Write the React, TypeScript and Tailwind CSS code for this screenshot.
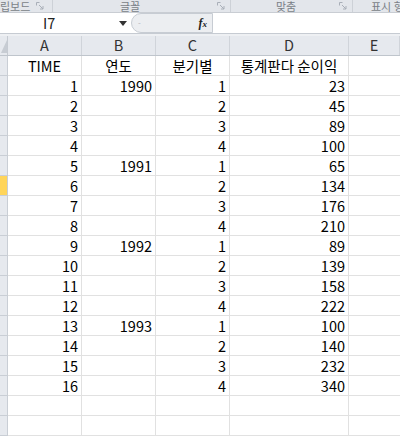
import React from "react";

const rows: [string, string, string, string][] = [
  ["1", "1990", "1", "23"],
  ["2", "", "2", "45"],
  ["3", "", "3", "89"],
  ["4", "", "4", "100"],
  ["5", "1991", "1", "65"],
  ["6", "", "2", "134"],
  ["7", "", "3", "176"],
  ["8", "", "4", "210"],
  ["9", "1992", "1", "89"],
  ["10", "", "2", "139"],
  ["11", "", "3", "158"],
  ["12", "", "4", "222"],
  ["13", "1993", "1", "100"],
  ["14", "", "2", "140"],
  ["15", "", "3", "232"],
  ["16", "", "4", "340"],
];

const font = { fontFamily: '"Noto Sans CJK KR", "Noto Sans", sans-serif' };

function Launcher() {
  return (
    <svg width="8" height="8" viewBox="0 0 8 8" className="shrink-0">
      <path d="M0.5 0.5h3M0.5 0.5v3" stroke="#a9afb8" fill="none" />
      <path d="M3 3l4 4M7 4v3H4" stroke="#a9afb8" fill="none" />
    </svg>
  );
}

export default function App() {
  const gridCols = "grid grid-cols-[8px_74px_74px_74px_119px_1fr]";
  return (
    <div className="w-[400px] h-[437px] overflow-hidden bg-white text-black" style={font}>
      {/* ribbon group labels */}
      <div className="h-[13px] bg-[#e3e6eb] border-b border-[#c9cdd3] flex text-[11px] leading-none text-[#7a7f87]">
        <div className="w-[53px] shrink-0 flex items-center justify-between pr-[8px] border-r border-[#cdd1d7] h-full">
          <span>립보드</span>
          <Launcher />
        </div>
        <div className="w-[178px] shrink-0 flex items-center justify-between pr-[5px] pl-[67px] border-r border-[#cdd1d7] h-full">
          <span>글꼴</span>
          <Launcher />
        </div>
        <div className="w-[122px] shrink-0 flex items-center justify-between pr-[5px] pl-[45px] border-r border-[#cdd1d7] h-full">
          <span>맞춤</span>
          <Launcher />
        </div>
        <div className="flex-1 min-w-0 flex items-center pl-[18px] h-full">
          <span className="whitespace-nowrap">표시 형</span>
        </div>
      </div>
      {/* formula bar */}
      <div className="h-[21px] flex items-center bg-white border-b border-[#c6cbd2]">
        <div className="w-[131px] shrink-0 h-full flex items-center relative">
          <span className="absolute left-[43px] text-[14.5px] leading-none text-[#222]">I7</span>
          <svg width="8" height="5" viewBox="0 0 8 5" className="absolute left-[119px] top-[8px]">
            <path d="M0 0h8L4 5z" fill="#333" />
          </svg>
        </div>
        <div className="w-[82px] shrink-0 h-[20px] rounded-l-full bg-[#eceef1] border border-[#c7ccd3] flex items-center justify-between pl-[6px] pr-[5px]">
          <span className="text-[8px] text-[#b0b4ba] leading-none">-</span>
          <span className="italic font-bold text-[12px] leading-none text-[#222]" style={{ fontFamily: '"Liberation Serif", serif' }}>
            f<span className="text-[9px]">x</span>
          </span>
        </div>
        <div className="flex-1 h-full bg-white" />
      </div>
      <div className="h-[2px] bg-[#eef0f3]" />
      {/* column headers */}
      <div className={`${gridCols} h-[20px] bg-[#e6e9ee] border-b border-[#bfc5cc] text-[14.5px] text-[#333]`}>
        <div className="border-r border-[#c5cad1] relative overflow-hidden">
          <svg width="8" height="19" className="absolute left-0 top-0">
            <path d="M7 4L7 17L1 17Z" fill="#c7ccd3" />
          </svg>
        </div>
        {["A", "B", "C", "D", "E"].map((c) => (
          <div key={c} className="border-r border-[#d0d4da] flex items-center justify-center leading-none">
            {c}
          </div>
        ))}
      </div>
      {/* title row */}
      <div className={`${gridCols} h-[20px] text-[14.5px] leading-none`}>
        <div className="bg-[#e6e9ee] border-r border-b border-[#c9ced5]" />
        <div className="border-r border-b border-[#e1e1e1] flex items-center justify-center pt-[1px]">TIME</div>
        <div className="border-r border-b border-[#e1e1e1] flex items-center justify-center pt-[1px]">연도</div>
        <div className="border-r border-b border-[#e1e1e1] flex items-center justify-center pt-[1px]">분기별</div>
        <div className="border-r border-b border-[#e1e1e1] flex items-center justify-center pt-[1px]">통계판다 순이익</div>
        <div className="border-b border-[#e1e1e1]" />
      </div>
      {rows.map((r, i) => (
        <div key={i} className={`${gridCols} h-[20px] text-[14.5px] leading-none`}>
          <div
            className={`border-r border-b border-[#c9ced5] ${i === 5 ? "bg-[#ffd55a]" : "bg-[#e6e9ee]"}`}
          />
          {r.map((v, j) => (
            <div key={j} className="border-r border-b border-[#e1e1e1] flex items-center justify-end pr-[3px] pt-[1px]">
              {v}
            </div>
          ))}
          <div className="border-b border-[#e1e1e1]" />
        </div>
      ))}
      {[0, 1].map((k) => (
        <div key={k} className={`${gridCols} h-[20px]`}>
          <div className="bg-[#e6e9ee] border-r border-b border-[#c9ced5]" />
          <div className="border-r border-b border-[#e1e1e1]" />
          <div className="border-r border-b border-[#e1e1e1]" />
          <div className="border-r border-b border-[#e1e1e1]" />
          <div className="border-r border-b border-[#e1e1e1]" />
          <div className="border-b border-[#e1e1e1]" />
        </div>
      ))}
    </div>
  );
}
